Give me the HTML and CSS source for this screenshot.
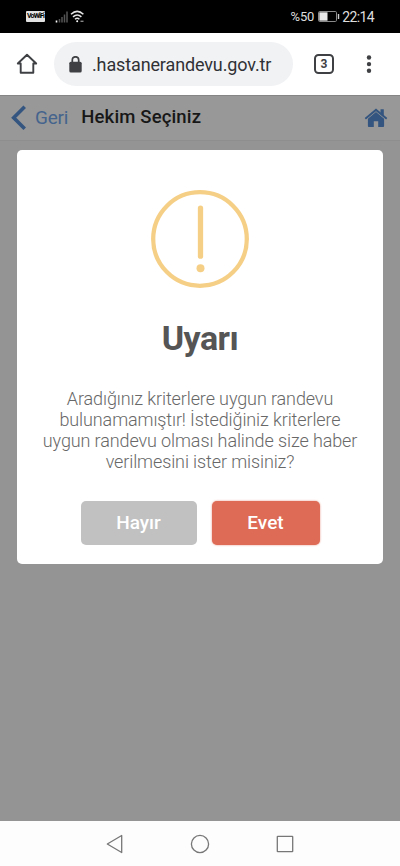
FILE: index.html
```html
<!DOCTYPE html>
<html lang="tr">
<head>
<meta charset="utf-8">
<meta name="viewport" content="width=device-width, initial-scale=1">
<title>Hekim Seçiniz</title>
<link rel="stylesheet" href="styles.css">
</head>
<body>
<div class="phone">
  <div class="status">
    <span class="vowifi">VoWiFi</span>
    <svg class="signal" width="14" height="12" viewBox="0 0 14 12"><path d="M1.5 9.5v2" stroke="#fff" stroke-width="1.6"/><path d="M4.5 8v3.5M7 6v5.500M9.500 3.500v8M12 .5v11" stroke="#555" stroke-width="1.500"/></svg>
    <svg class="wifi" width="15" height="13" viewBox="0 0 15 13" fill="none" stroke="#e4e4e4" stroke-width="1.500"><path d="M1 4.300Q7.200-1.600 13.400 4.300M3 6.900Q7.200 3 11.400 6.900M5 9.300Q7.200 7.300 9.400 9.300"/><circle cx="7.200" cy="11.200" r="1" fill="#fff" stroke="none"/><path d="M10.500 11.300h3" stroke="#888" stroke-width="1.400"/></svg>
    <span class="percent">%50</span>
    <svg class="battery" width="22" height="11" viewBox="0 0 22 11"><rect x=".5" y=".5" width="18" height="10" rx="1.200" fill="none" stroke="#8b8b8b"/><rect x="1.300" y="1.300" width="8.200" height="8.400" fill="#e9e9e9"/><path d="M20.500 3v5" stroke="#ccc" stroke-width="1.400"/></svg>
    <span class="clock">22:14</span>
  </div>

  <div class="browser">
    <svg class="home" width="22" height="22" viewBox="0 0 22 22" fill="none" stroke="#3e4043" stroke-width="1.900" stroke-linejoin="round" stroke-linecap="round"><path d="M4.700 10.500H1.800L11 1.800l9.200 8.700h-2.900v9.300H4.700z"/></svg>
    <div class="address">
      <svg width="13" height="17" viewBox="0 0 13 17"><path d="M3.300 6.500V4a3.200 3.200 0 0 1 6.400 0v2.500" fill="none" stroke="#3e4043" stroke-width="1.700"/><rect x=".3" y="5.700" width="12.400" height="10.800" rx="1.600" fill="#3e4043"/></svg>
      <span class="url">.hastanerandevu.gov.tr</span>
    </div>
    <span class="tabs">3</span>
    <svg class="more" width="6" height="20" viewBox="0 0 6 20" fill="#3e4043"><circle cx="3" cy="3.500" r="2.200"/><circle cx="3" cy="10.100" r="2.200"/><circle cx="3" cy="16.700" r="2.200"/></svg>
  </div>

  <div class="page">
    <div class="header">
      <svg class="chevron" width="16" height="26" viewBox="0 0 16 26" fill="none" stroke="#34557f" stroke-width="3.600"><path d="M13.700 1.800 2.700 12.800l11 11"/></svg>
      <span class="back">Geri</span>
      <span class="title">Hekim Seçiniz</span>
      <svg class="house" width="24" height="20" viewBox="0 0 24 20" fill="#34557f"><path d="M12 3.900 3.900 10.800V18q0 .9.900.9h5v-5.700h4.400v5.700h5q.9 0 .9-.9v-7.200z"/><path d="M12 .6 23.300 10.100l-1.200 1.500L12 3.200 1.900 11.600.7 10.100z"/><path d="M16.500 1.200h3.300v7l-3.300-2.800z"/></svg>
    </div>
    <div class="modal">
      <svg class="warn" width="98" height="98" viewBox="0 0 98 98"><circle cx="49" cy="49" r="46.800" fill="none" stroke="#f6cf86" stroke-width="4.300"/><path d="M49.500 18.200v48" stroke="#f6cf86" stroke-width="5.300" stroke-linecap="round"/><circle cx="49.500" cy="78.200" r="4" fill="#f6cf86"/></svg>
      <h1>Uyarı</h1>
      <p>Aradığınız kriterlere uygun randevu<br>bulunamamıştır! İstediğiniz kriterlere<br>uygun randevu olması halinde size haber<br>verilmesini ister misiniz?</p>
      <div class="buttons">
        <button class="no">Hayır</button>
        <button class="yes">Evet</button>
      </div>
    </div>
  </div>

  <div class="nav">
    <svg width="18" height="20" viewBox="0 0 18 20" fill="none" stroke="#777" stroke-width="1.300" stroke-linejoin="round"><path d="M15.700 1.500v17L1.300 10z"/></svg>
    <svg width="20" height="20" viewBox="0 0 20 20" fill="none" stroke="#777" stroke-width="1.300"><circle cx="10" cy="10" r="8.600"/></svg>
    <svg width="18" height="18" viewBox="0 0 18 18" fill="none" stroke="#777" stroke-width="1.300"><rect x="1.300" y="1.300" width="15.400" height="15.400" rx=".5"/></svg>
  </div>
</div>
</body>
</html>
```
FILE: styles.css
```css
* { box-sizing: border-box; }
body { margin: 0; font-family: Roboto, "Liberation Sans", sans-serif; background: #fff; }
svg { display: block; flex: none; }
.phone { width: 400px; height: 866px; display: flex; flex-direction: column; overflow: hidden; }

.status { height: 33px; flex: none; background: #000; color: #dedede; display: flex; align-items: center; padding: 0 26px; }
.vowifi { width: 19px; height: 11px; border-radius: 1px; background: #e2e2e2; color: #000; font-size: 7px; line-height: 11px; font-weight: 700; text-align: center; letter-spacing: -0.8px; white-space: nowrap; }
.signal { margin-left: 10px; }
.wifi { margin-left: 1px; }
.percent { margin-left: auto; font-size: 13px; letter-spacing: -0.2px; }
.battery { margin-left: 4px; }
.clock { margin-left: 2px; font-size: 14px; letter-spacing: -0.6px; }

.browser { height: 62px; flex: none; background: #fff; display: flex; align-items: center; padding: 0 28px 0 16px; }
.address { width: 239px; height: 44px; margin-left: 16px; border-radius: 22px; background: #f1f2f4; display: flex; align-items: center; padding-left: 15px; }
.url { margin-left: 10px; font-size: 18px; letter-spacing: -0.13px; color: #303134; white-space: nowrap; }
.tabs { width: 20px; height: 20px; margin-left: 21px; border: 2px solid #3e4043; border-radius: 4.500px; font-size: 12px; line-height: 17px; font-weight: 700; text-align: center; color: #3e4043; }
.more { margin-left: auto; }

.page { flex: 1; background: #949494; }
.header { height: 46px; display: flex; align-items: center; padding: 0 12px 2px 11px; border-top: 1px solid #858585; border-bottom: 1px solid #8e8e8e; background: #989898; }
.chevron, .house { margin-top: 2px; }
.back { margin: 1px 0 0 8px; font-size: 19px; letter-spacing: -0.2px; color: #45648d; }
.title { margin-left: 13px; font-size: 18.500px; letter-spacing: 0.15px; font-weight: 500; color: #171717; }
.house { margin-left: auto; }

.modal { width: 366px; height: 414px; margin: 9px auto 0 17px; border-radius: 5px; background: #fff; display: flex; flex-direction: column; align-items: center; padding-top: 40px; }
h1 { margin: 29px 0 0; font-size: 34px; line-height: 42px; letter-spacing: -0.5px; font-weight: 700; color: #555; }
p { margin: 29px 0 0; font-size: 18px; line-height: 21px; letter-spacing: -0.11px; font-weight: 300; color: #686868; text-align: center; white-space: nowrap; }
.buttons { margin-top: 29px; display: flex; gap: 15px; }
button { height: 44px; padding: 0; border: 0; border-radius: 5px; font: 500 19px/44px Roboto, "Liberation Sans", sans-serif; color: #fff; }
.no { width: 116px; background: #c1c1c1; }
.yes { width: 108px; background: #dd6b55; box-shadow: 0 0 2px rgba(221, 107, 85, .8); }

.nav { height: 45px; flex: none; background: #fdfdfd; display: flex; align-items: center; justify-content: space-between; padding: 0 106px; }
```
